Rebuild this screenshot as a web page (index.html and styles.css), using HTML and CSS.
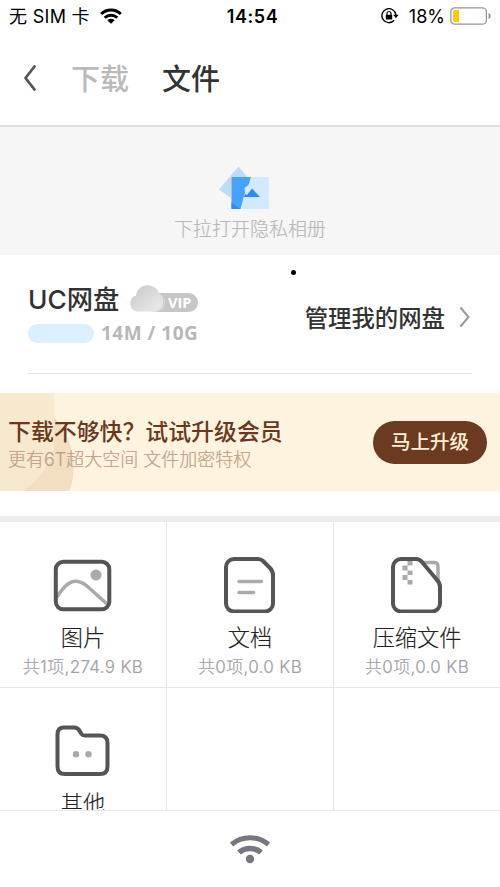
FILE: index.html
```html
<!DOCTYPE html>
<html lang="zh-CN">
<head>
<meta charset="utf-8">
<title>文件</title>
<link rel="stylesheet" href="styles.css">
</head>
<body>
<div class="screen">
  <div class="status">
    <div class="status-side">
      <span class="carrier">无 SIM 卡</span>
      <svg class="status-wifi" width="22" height="16" viewBox="0 0 22 16" fill="none" stroke="#000" stroke-width="3"><path d="M1.2 6a14 14 0 0 1 19.6 0"/><path d="M4.7 9.700a9 9 0 0 1 12.600 0"/><path d="M7.300 12.200a5.500 5.500 0 0 1 7.400 0L11 15.800z" fill="#000" stroke="none"/></svg>
    </div>
    <div class="clock">14:54</div>
    <div class="status-side right">
      <svg width="18" height="16" viewBox="0 0 18 16"><path d="M13.200 12.300A7 7 0 1 1 14.900 7" fill="none" stroke="#000" stroke-width="1.400"/><path d="M12.200 6.700h5.400l-2.700 3.500z"/><rect x="4.800" y="6.800" width="6.400" height="4.800" rx=".7"/><path d="M6 7V5.500a2 2 0 0 1 4 0V7" fill="none" stroke="#000" stroke-width="1.200"/></svg>
      <span class="percent">18%</span>
      <svg width="42" height="18" viewBox="0 0 42 18"><rect x=".8" y=".8" width="35.600" height="16.400" rx="4" fill="#fff" stroke="#999" stroke-width="1.300"/><path d="M5 3h4v12H5a2 2 0 0 1-2-2V5a2 2 0 0 1 2-2z" fill="#fc0"/><path d="M38.500 6c3 1 3 5 0 6z" fill="#999"/></svg>
    </div>
  </div>
  <div class="header">
    <svg class="back" width="14" height="28" viewBox="0 0 14 28"><path d="M11.500 2.500 2.500 14l9 11.500" fill="none" stroke="#555" stroke-width="2.800" stroke-linecap="round" stroke-linejoin="round"/></svg>
    <span class="tab muted">下载</span>
    <span class="tab">文件</span>
  </div>
  <div class="pull">
    <svg width="52" height="44" viewBox="0 0 52 44"><path d="M19.500.5 39 24 25.500 42 0 23.500z" fill="#bddcf8"/><path d="M12 11h38v32H12z" fill="#d5e9fd"/><path d="M12.500 11H32l-2.500 8-4 3 .5 5-1.500 4.500L21.500 43h-9z" fill="#48a1fb"/><path d="M12.500 36.500 21.500 43h-9z" fill="#2d8df5"/><path d="m24.500 31 2-3 1.500 1 5-6.500 8 8.500z" fill="#288cf3"/></svg>
    <div class="pull-text">下拉打开隐私相册</div>
  </div>
  <div class="storage">
    <div class="storage-left">
      <div class="drive">
        <span class="drive-name"><span class="latin">UC</span>网盘</span>
        <svg class="vip" width="70" height="28" viewBox="0 0 70 28">
          <defs><linearGradient id="cloud" x1="0" y1="0" x2="1" y2="1"><stop offset="0" stop-color="#c5c5c5"/><stop offset=".55" stop-color="#dcdcdc"/><stop offset="1" stop-color="#ececec"/></linearGradient></defs>
          <rect x="18" y="8" width="51" height="19" rx="9.500" fill="#c6c6c6"/>
          <path d="M30 8.500a10 10 0 0 1 0 18l-8 .5z" fill="#e5e5e5"/><path d="M31 10a9.500 9.500 0 0 1-3 16.500" fill="none" stroke="#c9c9c9"/>
          <path d="M8 26.500a8.300 8.300 0 0 1-1-16C8 4 13 .3 18.500.3S29.500 4 30.500 9.500c3 1.500 3.500 5 2.500 8.500-1.500 5.500-5 8.500-9 8.500z" fill="url(#cloud)"/>
          <text class="vip-text" x="39" y="22.500">VIP</text>
        </svg>
      </div>
      <div class="usage"><span class="meter"></span><span class="quota">14M / 10G</span></div>
    </div>
    <div class="manage">管理我的网盘
      <svg width="12" height="22" viewBox="0 0 12 22"><path d="m1.500 1.500 8 9.500-8 9.500" fill="none" stroke="#999" stroke-width="2"/></svg>
    </div>
    <span class="touch-dot"></span>
  </div>
  <div class="banner">
    <div>
      <div class="banner-title">下载不够快？试试升级会员</div>
      <div class="banner-sub">更有<span class="light">6T</span>超大空间 文件加密特权</div>
    </div>
    <div class="upgrade">马上升级</div>
  </div>
  <div class="grid">
    <div class="cell">
      <svg width="60" height="60" viewBox="0 0 60 60" fill="none"><path d="M4 44C14 28 22 24 34 33L54 51" stroke="#aaa" stroke-width="3.500"/><circle cx="43" cy="22" r="5.500" fill="#aaa"/><rect x="2.800" y="8.800" width="53.500" height="47.500" rx="7.500" stroke="#555" stroke-width="4"/></svg>
      <div class="name">图片</div><div class="count">共1项,274.9 KB</div>
    </div>
    <div class="cell">
      <svg width="60" height="60" viewBox="0 0 60 60" fill="none"><path d="M19 28.500h22.500M19 39.500h14.500" stroke="#aaa" stroke-width="3.500" stroke-linecap="round"/><path d="M14 6h24q3 0 5 2l7 7q3 3 3 7v28.500a8 8 0 0 1-8 8H14a8 8 0 0 1-8-8V14a8 8 0 0 1 8-8z" stroke="#555" stroke-width="4"/></svg>
      <div class="name">文档</div><div class="count">共0项,0.0 KB</div>
    </div>
    <div class="cell">
      <svg width="60" height="60" viewBox="0 0 60 60" fill="none"><path d="M35 9.500h12q4 0 4 4V29" stroke="#aaa" stroke-width="3.500"/><path d="M20.500 8h5v4.500h-5zM15.500 12.500h5v5h-5zM20.500 17.500h5v4.500h-5zM15.500 22h5v5h-5zM20.500 27h5v4.500h-5z" fill="#aaa"/><path d="M14 6h15q3.500 0 6 3l15 18q3 3 3 7v16.500a8 8 0 0 1-8 8H14a8 8 0 0 1-8-8V14a8 8 0 0 1 8-8z" stroke="#555" stroke-width="4"/></svg>
      <div class="name">压缩文件</div><div class="count">共0项,0.0 KB</div>
    </div>
    <div class="cell">
      <svg width="60" height="60" viewBox="0 0 60 60" fill="none"><path d="M11 8.500h10q4 0 6 4l1.500 2.500q1 1.500 3 1.500H47q7.500 0 7.500 7.500v23.500q0 7.500-7.500 7.500H12q-7.500 0-7.500-7.500V15.500q0-7 6.500-7z" stroke="#555" stroke-width="4"/><circle cx="23" cy="35.300" r="3.200" fill="#aaa"/><circle cx="35.500" cy="35.300" r="3.200" fill="#aaa"/></svg>
      <div class="name">其他</div>
    </div>
    <div class="cell"></div>
    <div class="cell"></div>
  </div>
  <div class="tabbar">
    <svg width="42" height="32" viewBox="0 0 42 32" fill="none" stroke="#787781" stroke-width="5"><path d="M2.500 11.500C13 2.500 29 2.500 39.500 11.500"/><path d="M10 19.500c6-5.500 16-5.500 22 0" stroke-width="5.500"/><circle cx="21" cy="26" r="4.200" fill="#787781" stroke="none"/></svg>
  </div>
</div>
</body>
</html>
```
FILE: styles.css
```css
* { box-sizing: border-box; }
body {
  margin: 0;
  background: #fff;
  color: #333;
  font-family: Inter, "Noto Sans CJK SC", sans-serif;
}
svg { display: block; flex: none; }
.screen {
  width: 500px;
  height: 887px;
  overflow: hidden;
  display: flex;
  flex-direction: column;
  white-space: nowrap;
}
.status {
  height: 32px;
  flex: none;
  display: flex;
  align-items: center;
  padding: 0 8px 0 9px;
  color: #000;
}
.status-side { flex: 1; display: flex; align-items: center; }
.status-side.right { justify-content: flex-end; }
.carrier { font-size: 18px; line-height: 24px; letter-spacing: 0.3px; padding-top: 1px; }
.status-wifi { margin-left: 10px; }
.clock { font-size: 18px; font-weight: 600; letter-spacing: 0.6px; padding-left: 4px; }
.percent { font-size: 18px; margin: 0 5px 0 10px; }
.header {
  height: 95px;
  flex: none;
  display: flex;
  align-items: center;
  border-bottom: 2px solid #dedede;
  padding: 0 0 1px 23px;
}
.tab { font-size: 29px; line-height: 40px; font-weight: 500; margin-left: 33px; padding-top: 4px; }
.tab.muted { color: #bababa; margin-left: 34px; }
.pull {
  height: 128px;
  flex: none;
  background: #f6f6f6;
  display: flex;
  flex-direction: column;
  align-items: center;
  padding-top: 39px;
}
.pull svg { margin-right: 10px; }
.pull-text { font-size: 19px; line-height: 28px; margin-top: 6px; color: #b9b9b9; -webkit-text-stroke: 0.2px #b9b9b9; font-weight: 300; }
.storage {
  position: relative;
  height: 119px;
  flex: none;
  margin: 0 28px;
  border-bottom: 1px solid #e4e4e4;
  display: flex;
  justify-content: space-between;
}
.drive { display: flex; margin-top: 28px; height: 34px; }
.drive-name { font-size: 26.3px; line-height: 34px; font-weight: 500; }
.latin { font-weight: 450; }
.vip { margin: 2px 0 0 10px; }
.vip-text { font: 700 14.5px "Open Sans", sans-serif; fill: #fff; }
.usage { display: flex; align-items: center; margin-top: 4px; height: 24px; }
.meter { width: 66px; height: 19px; border-radius: 10px; background: #dcefff; }
.quota { font: 700 19px/24px "Open Sans", sans-serif; color: #b7b7b7; margin-left: 7px; letter-spacing: 0.5px; }
.manage {
  display: flex;
  align-items: center;
  gap: 14px;
  height: 32px;
  margin: 46px 1px 0 0;
  font-size: 23.4px;
  font-weight: 500;
}
.touch-dot {
  position: absolute;
  left: 263px;
  top: 15px;
  width: 5px;
  height: 5px;
  border-radius: 50%;
  background: #000;
}
.banner {
  height: 98px;
  flex: none;
  margin-top: 19px;
  display: flex;
  justify-content: space-between;
  align-items: center;
  padding: 1px 13px 0 8px;
  background:
    radial-gradient(circle at -36px 18px, #f6e9cd 0 99px, transparent 100px) 0 0 / 54px 98px no-repeat,
    radial-gradient(circle at 0 74px, #f2dfc2 0 73px, transparent 74px) 0 0 / 100px 98px no-repeat,
    #fef3df;
}
.banner-title { font-size: 22.9px; line-height: 30px; font-weight: 500; color: #6b381e; padding-top: 4px; }
.banner-sub { font-size: 18px; line-height: 26px; color: #bea087; -webkit-text-stroke: 0.2px #bea087; font-weight: 300; }
.light { font-weight: 350; }
.upgrade {
  width: 114px;
  height: 43px;
  border-radius: 22px;
  background: #6b3a20;
  color: #fff0d9;
  font-size: 19.5px;
  line-height: 42px;
  font-weight: 500;
  text-align: center;
}
.grid {
  height: 294px;
  flex: none;
  margin-top: 25px;
  border-top: 6px solid #ececec;
  display: grid;
  grid-template-columns: 167px 167px 166px;
  grid-template-rows: 166px 166px;
  overflow: hidden;
}
.cell {
  border-right: 1px solid #e5e5e5;
  border-bottom: 1px solid #e5e5e5;
  display: flex;
  flex-direction: column;
  align-items: center;
  padding-top: 31px;
}
.cell:nth-child(3n) { border-right: 0; }
.name { font-size: 22.2px; line-height: 30px; margin-top: 10px; color: #222; -webkit-text-stroke: 0.15px #222; font-weight: 300; }
.count { font-size: 17px; line-height: 24px; margin-top: 2px; color: #a0a0a6; -webkit-text-stroke: 0.2px #a0a0a6; font-weight: 300; letter-spacing: 0.35px; }
.tabbar {
  height: 77px;
  flex: none;
  border-top: 1px solid #e9e9e9;
  background: #fff;
  display: flex;
  justify-content: center;
  padding-top: 22px;
}
```
